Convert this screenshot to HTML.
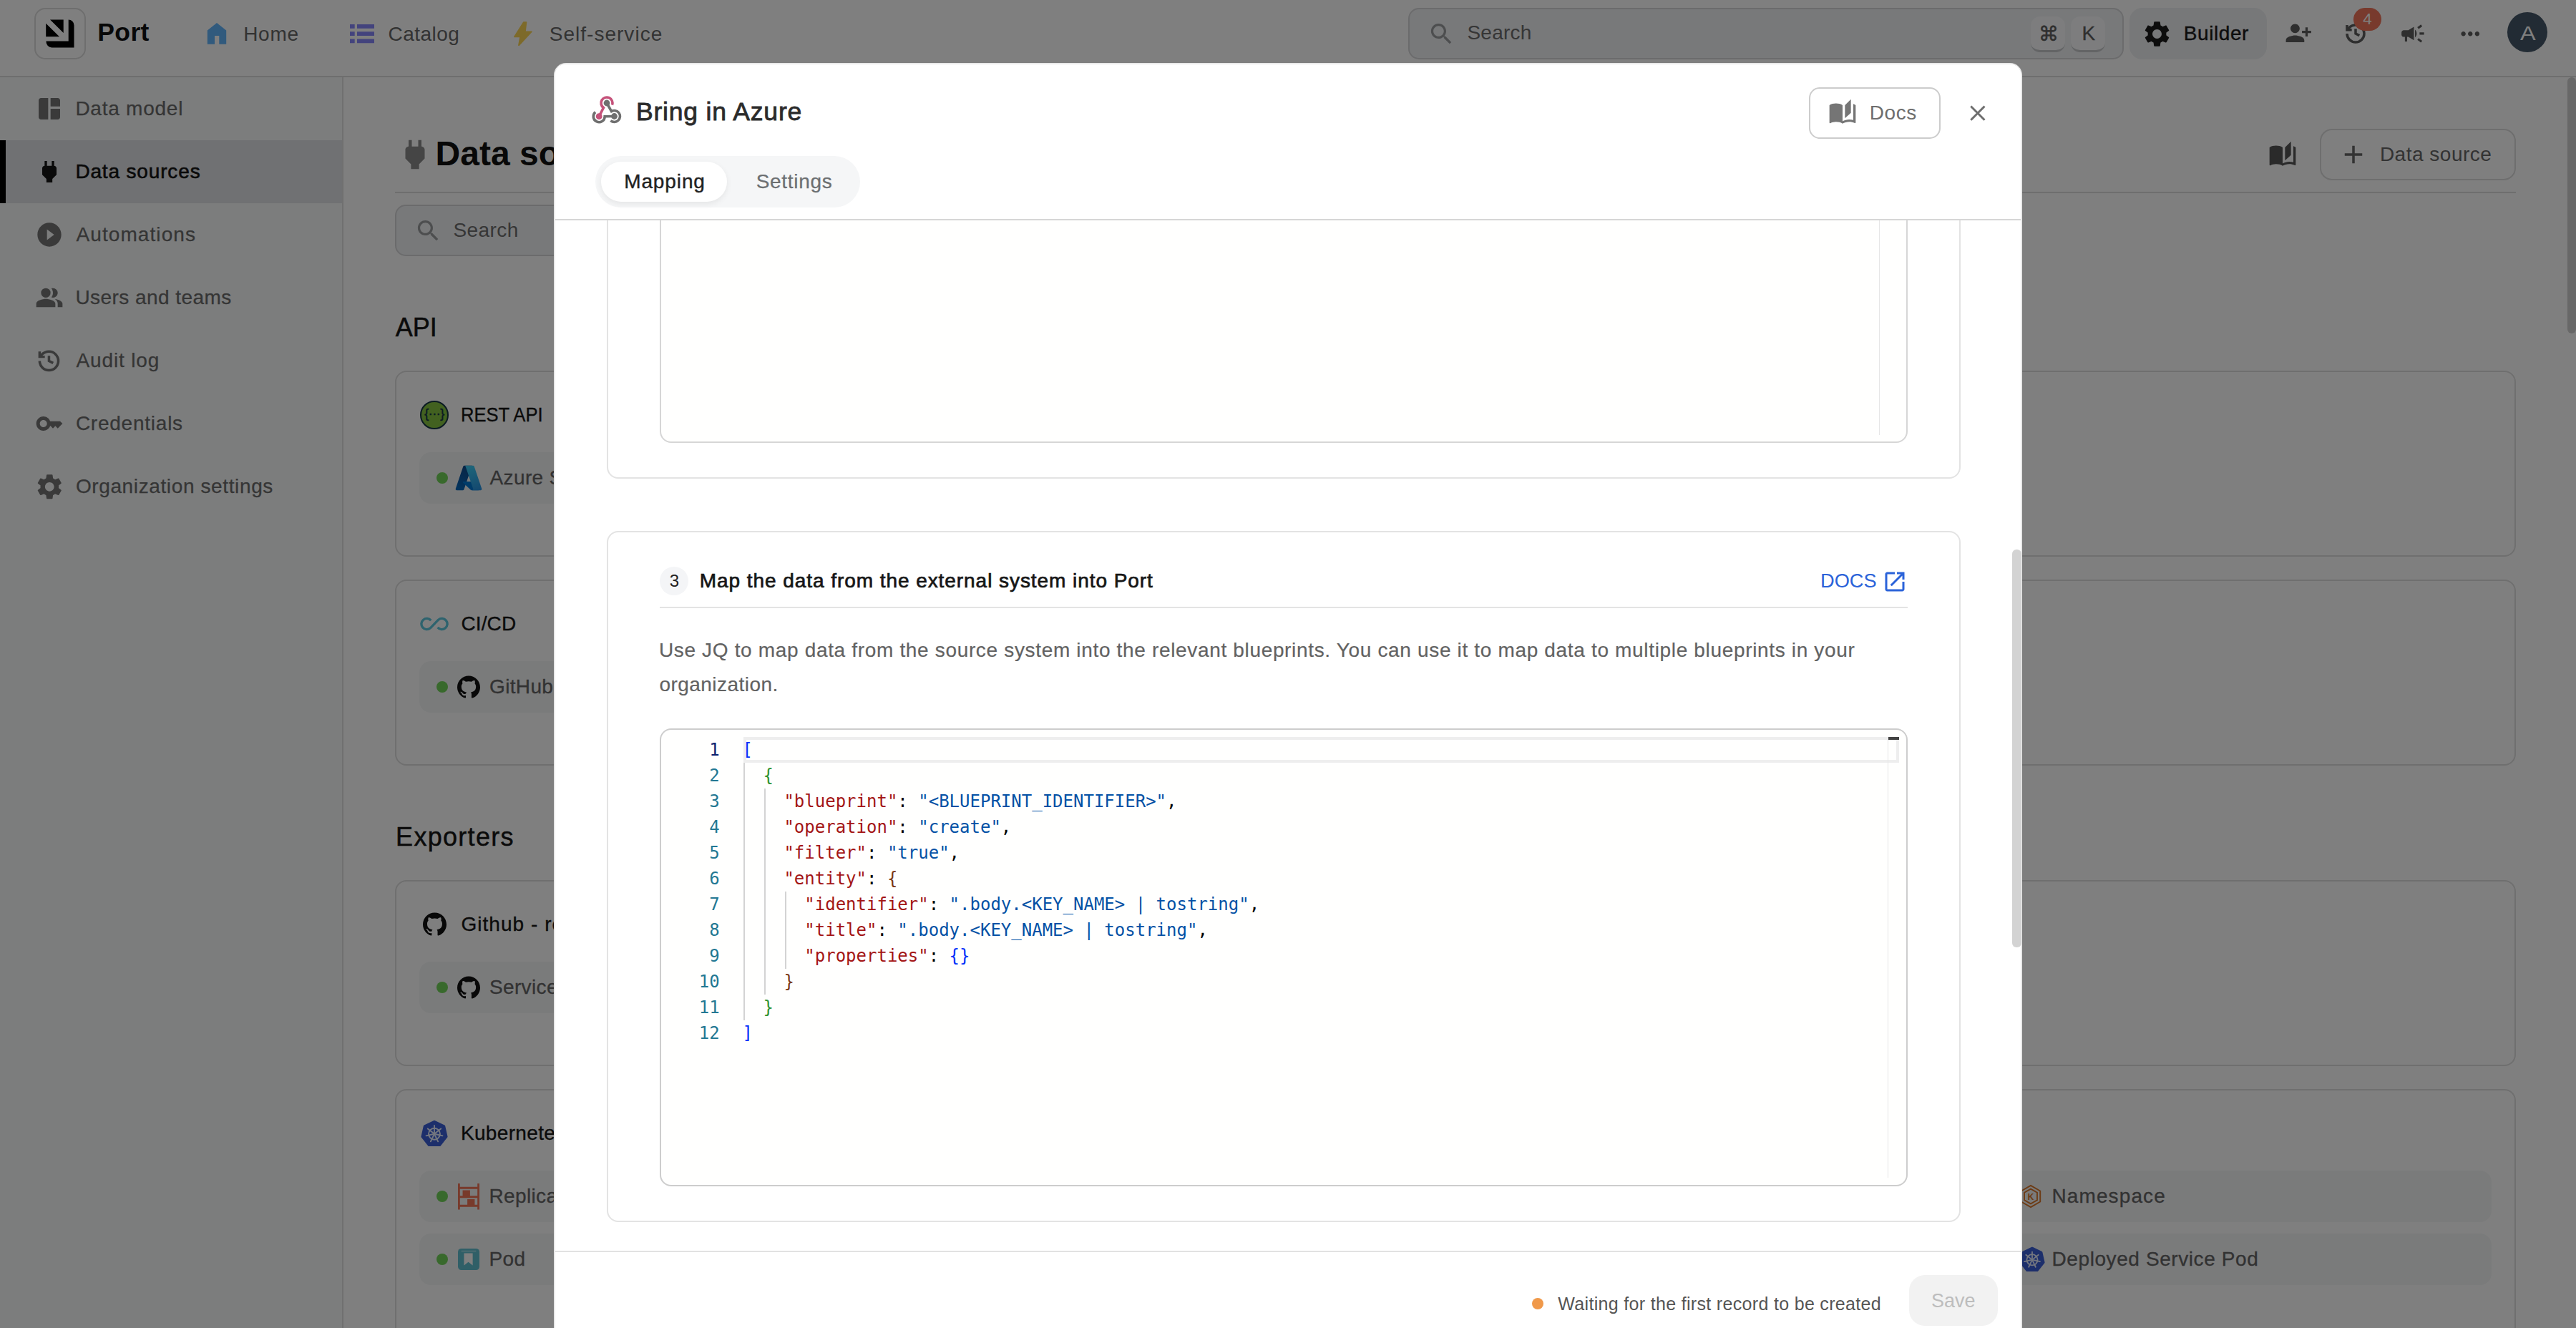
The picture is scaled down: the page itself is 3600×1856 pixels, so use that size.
<!DOCTYPE html>
<html lang="en">
<head>
<meta charset="utf-8">
<title>Port - Data sources</title>
<style>
*{box-sizing:border-box;margin:0;padding:0}
html,body{width:3600px;height:1856px;overflow:hidden;background:#fff}
body{font-family:"Liberation Sans",sans-serif;color:#1a1a1a;position:relative}
.t{position:absolute;white-space:nowrap;line-height:1;transform-origin:0 50%}
svg{position:absolute;display:block}
/* ---------- top nav ---------- */
#nav{position:absolute;left:0;top:0;width:3600px;height:108px;background:#fff;border-bottom:2px solid #dcdcdc}
#logo{position:absolute;left:48px;top:11px;width:72px;height:72px;border:2px solid #dcdcdc;border-radius:15px;background:#fff}
/* ---------- sidebar ---------- */
#side{position:absolute;left:0;top:108px;width:480px;height:1748px;background:#f8fafa;border-right:2px solid #e0e0e0}
/* ---------- main ---------- */
/* ---------- overlay + modal ---------- */
#ov{position:absolute;left:0;top:0;width:3600px;height:1856px;background:rgba(0,0,0,.5)}
#modal{position:absolute;left:774px;top:88px;width:2052px;height:1800px;background:#fff;border:2px solid #e9e9e9;border-bottom:0;border-radius:17px 17px 0 0}
.code{font-family:"DejaVu Sans Mono","Liberation Mono",monospace;font-size:24px;line-height:36px;white-space:pre}
/* safety net: if rendered in a 1800px CSS viewport at 2x DPR, scale the fixed 3600px canvas down */
@media (max-width:1900px){html{zoom:.5}}
</style>
</head>
<body>
<!-- ================= PAGE ================= -->
<div id="nav">
<div id="logo"></div>
<svg style="left:60px;top:23px" width="48" height="48" viewBox="60 23 48 48"><path fill="#000" d="M70 27.4H88.7V46Z M64.2 32.8V51.2H83Z M95.7 27.4a7.8 7.8 0 0 1 7.8 7.8V66.4H72.3a7.8 7.8 0 0 1-7.8-7.8V57.6H95.7Z"/></svg>
<div class="t" id="t1" style="left:136.2px;top:28.4px;font-size:35.5px;color:#111;font-weight:bold;letter-spacing:0.413px;">Port</div>
<svg style="left:288px;top:30px" width="30" height="34" viewBox="288 30 30 34"><path fill="#62b4fa" d="M303 32L316.2 42.5V61.7H306.3V50H300V61.7H289.8V42.5Z"/></svg>
<div class="t" id="t2" style="left:340.2px;top:33.7px;font-size:28px;color:#666666;letter-spacing:0.712px;">Home</div>
<svg style="left:489px;top:33.8px" width="34" height="27" viewBox="0 0 34 27"><path fill="#8686fb" d="M0 0h6.7v5.8H0zM10 0h24v5.8H10zM0 10.2h6.7v5.8H0zM10 10.2h24v5.8H10zM0 20.4h6.7v5.8H0zM10 20.4h24v5.8H10z"/></svg>
<div class="t" id="t3" style="left:542.6px;top:33.7px;font-size:28px;color:#666666;letter-spacing:0.454px;">Catalog</div>
<svg style="left:714px;top:28px" width="34" height="38" viewBox="714 28 34 38"><path fill="#fad454" stroke="#fad454" stroke-width="1.5" stroke-linejoin="round" d="M731.8 30.9H735.6L734 44.3H743L725.4 63.3H724.8L727 51.4H718.8Z"/></svg>
<div class="t" id="t4" style="left:767.7px;top:33.7px;font-size:28px;color:#666666;letter-spacing:1.025px;">Self-service</div>
<div style="position:absolute;left:1968.0px;top:11.0px;width:1000.0px;height:72.0px;background:#f0f2f5;border:2px solid #d6d7d9;border-radius:15px"></div>
<svg style="left:1995.0px;top:28.1px" width="39" height="39" viewBox="0 0 24 24"><path fill="#9a9d9f" d="M15.5 14h-.79l-.28-.27C15.41 12.59 16 11.11 16 9.5 16 5.91 13.09 3 9.5 3S3 5.91 3 9.5 5.91 16 9.5 16c1.61 0 3.09-.59 4.23-1.57l.27.28v.79l5 4.99L20.49 19l-4.99-5zm-6 0C7.01 14 5 11.99 5 9.5S7.01 5 9.5 5 14 7.01 14 9.5 11.99 14 9.5 14z"/></svg>
<div class="t" id="t5" style="left:2050.4px;top:32.3px;font-size:28px;color:#6c6c6c;letter-spacing:0.264px;">Search</div>
<div style="position:absolute;left:2838.0px;top:23.0px;width:48.0px;height:49.5px;background:#fafbfc;border-radius:13px;border-bottom:3px solid #c6c8cb"></div>
<div class="t" id="t6" style="left:2849.2px;top:33.9px;font-size:28px;color:#5e5e5e;-webkit-text-stroke:0.5px #5e5e5e;">&#8984;</div>
<div style="position:absolute;left:2894.0px;top:23.0px;width:48.0px;height:49.5px;background:#fafbfc;border-radius:13px;border-bottom:3px solid #c6c8cb"></div>
<div class="t" id="t7" style="left:2909.4px;top:33.4px;font-size:28px;color:#5e5e5e;-webkit-text-stroke:0.3px #5e5e5e;">K</div>
<div style="position:absolute;left:2976.0px;top:11.0px;width:192.0px;height:72.0px;background:#eef0f3;border-radius:18px"></div>
<svg style="left:2993.2px;top:25.8px" width="43" height="43" viewBox="0 0 24 24"><path fill="#1a1a1a" d="M19.14 12.94c.04-.3.06-.61.06-.94 0-.32-.02-.64-.07-.94l2.03-1.58c.18-.14.23-.41.12-.61l-1.92-3.32c-.12-.22-.37-.29-.59-.22l-2.39.96c-.5-.38-1.03-.7-1.62-.94l-.36-2.54c-.04-.24-.24-.41-.48-.41h-3.84c-.24 0-.43.17-.47.41l-.36 2.54c-.59.24-1.13.57-1.62.94l-2.39-.96c-.22-.08-.47 0-.59.22L2.74 8.87c-.12.21-.08.47.12.61l2.03 1.58c-.05.3-.09.63-.09.94s.02.64.07.94l-2.03 1.58c-.18.14-.23.41-.12.61l1.92 3.32c.12.22.37.29.59.22l2.39-.96c.5.38 1.03.7 1.62.94l.36 2.54c.05.24.24.41.48.41h3.84c.24 0 .44-.17.47-.41l.36-2.54c.59-.24 1.13-.56 1.62-.94l2.39.96c.22.08.47 0 .59-.22l1.92-3.32c.12-.22.07-.47-.12-.61l-2.01-1.58zM12 15.6c-1.98 0-3.6-1.62-3.6-3.6s1.62-3.6 3.6-3.6 3.6 1.62 3.6 3.6-1.62 3.6-3.6 3.6z"/></svg>
<div class="t" id="t8" style="left:3051.8px;top:32.8px;font-size:28px;color:#1a1a1a;-webkit-text-stroke:0.4px #1a1a1a;letter-spacing:0.578px;">Builder</div>
<svg style="left:3192.8px;top:27.4px" width="38.5" height="38.5" viewBox="0 0 24 24"><path fill="#5c5c5c" d="M13 8c0-2.21-1.79-4-4-4S5 5.79 5 8s1.79 4 4 4 4-1.79 4-4zm2 2v2h3v3h2v-3h3v-2h-3V7h-2v3h-3zM1 18v2h16v-2c0-2.66-5.33-4-8-4s-8 1.34-8 4z"/></svg>
<svg style="left:3276.4px;top:31.0px" width="32.0" height="32.0" viewBox="0 0 24 24"><g fill="none" stroke="#5c5c5c" stroke-width="2.62" stroke-linecap="butt" stroke-linejoin="miter"><path d="M3 12a9 9 0 1 0 9-9 9.75 9.75 0 0 0-6.74 2.74L3 8"/><path d="M3 3v5h5"/><path d="M12 7v5l4 2"/></g></svg>
<div style="position:absolute;left:3289.0px;top:11.0px;width:39.0px;height:32.0px;background:#f0745a;border-radius:16px"></div>
<div class="t" id="t9" style="left:3302.3px;top:16.4px;font-size:22.5px;color:#fff;">4</div>
<svg style="left:3352.9px;top:27.9px" width="37.8" height="37.8" viewBox="0 0 24 24"><path fill="#5c5c5c" d="M18 11v2h4v-2h-4zm-2 6.61c.96.71 2.21 1.65 3.2 2.39.4-.53.8-1.07 1.2-1.6-.99-.74-2.24-1.68-3.2-2.4-.4.54-.8 1.08-1.2 1.61zM20.4 5.6c-.4-.53-.8-1.07-1.2-1.6-.99.74-2.24 1.68-3.2 2.4.4.53.8 1.07 1.2 1.6.96-.72 2.21-1.65 3.2-2.4zM4 9c-1.1 0-2 .9-2 2v2c0 1.1.9 2 2 2h1v4h2v-4h1l5 3V6L8 9H4zm11.5 3c0-1.33-.58-2.53-1.5-3.35v6.69c.92-.81 1.5-2.01 1.5-3.34z"/></svg>
<svg style="left:3432.6px;top:27.7px" width="38.5" height="38.5" viewBox="0 0 24 24"><path fill="#5c5c5c" d="M6 10c-1.1 0-2 .9-2 2s.9 2 2 2 2-.9 2-2-.9-2-2-2zm12 0c-1.1 0-2 .9-2 2s.9 2 2 2 2-.9 2-2-.9-2-2-2zm-6 0c-1.1 0-2 .9-2 2s.9 2 2 2 2-.9 2-2-.9-2-2-2z"/></svg>
<div style="position:absolute;left:3503.6px;top:17.0px;width:56.4px;height:56.0px;background:#445668;border-radius:50%"></div>
<div class="t" id="t10" style="left:3522.0px;top:32.8px;font-size:28px;color:#fff;transform:scaleX(1.1580);">A</div>
</div>
<div id="side">
<svg style="left:49.0px;top:24.0px" width="40" height="40" viewBox="0 0 24 24"><path fill="#747474" d="M11 21H5c-1.1 0-2-.9-2-2V5c0-1.1.9-2 2-2h6v18zm2 0h6c1.1 0 2-.9 2-2v-7h-8v9zm8-11V5c0-1.1-.9-2-2-2h-6v7h8z"/></svg>
<div class="t" id="t11" style="left:105.4px;top:30.0px;font-size:28px;color:#6a6a6a;-webkit-text-stroke:0.25px #6a6a6a;letter-spacing:0.761px;">Data model</div>
<div style="position:absolute;left:0.0px;top:88.0px;width:478.0px;height:88.0px;background:#e1e3e6;border-left:8px solid #000"></div>
<svg style="left:49.0px;top:112.0px" width="40" height="40" viewBox="0 0 24 24"><path fill="#141414" d="M16.01 7L16 3h-2v4h-4V3H8v4h-.01C7 6.99 6 7.99 6 8.99v5.49L9.5 18v3h5v-3l3.5-3.51v-5.5c0-1-1-2-1.99-1.99z"/></svg>
<div class="t" id="t12" style="left:105.4px;top:118.0px;font-size:28px;color:#141414;-webkit-text-stroke:0.6px #141414;letter-spacing:0.843px;">Data sources</div>
<svg style="left:49.0px;top:200.0px" width="40" height="40" viewBox="0 0 24 24"><path fill="#747474" d="M12 2C6.48 2 2 6.48 2 12s4.48 10 10 10 10-4.48 10-10S17.52 2 12 2zm-2 14.5v-9l6 4.5-6 4.5z"/></svg>
<div class="t" id="t13" style="left:106.5px;top:206.0px;font-size:28px;color:#6a6a6a;-webkit-text-stroke:0.25px #6a6a6a;letter-spacing:1.080px;">Automations</div>
<svg style="left:49.0px;top:288.0px" width="40" height="40" viewBox="0 0 24 24"><path fill="#747474" d="M16.67 13.13C18.04 14.06 19 15.32 19 17v3h4v-3c0-2.18-3.57-3.47-6.33-3.87zM9 12a4 4 0 1 0 0-8 4 4 0 0 0 0 8zM15 12c2.21 0 4-1.79 4-4s-1.79-4-4-4c-.47 0-.91.1-1.33.24C14.5 5.27 15 6.580 15 8s-.5 2.730-1.330 3.760c.42.14.86.24 1.330.24zM9 13c-2.670 0-8 1.340-8 4v3h16v-3c0-2.660-5.330-4-8-4z"/></svg>
<div class="t" id="t14" style="left:105.4px;top:294.0px;font-size:28px;color:#6a6a6a;-webkit-text-stroke:0.25px #6a6a6a;letter-spacing:0.443px;">Users and teams</div>
<svg style="left:51.3px;top:378.5px" width="34.9" height="34.9" viewBox="0 0 24 24"><g fill="none" stroke="#747474" stroke-width="2.40" stroke-linecap="butt" stroke-linejoin="miter"><path d="M3 12a9 9 0 1 0 9-9 9.75 9.75 0 0 0-6.74 2.74L3 8"/><path d="M3 3v5h5"/><path d="M12 7v5l4 2"/></g></svg>
<div class="t" id="t15" style="left:106.5px;top:382.0px;font-size:28px;color:#6a6a6a;-webkit-text-stroke:0.25px #6a6a6a;letter-spacing:0.859px;">Audit log</div>
<svg style="left:49.0px;top:464.0px" width="40" height="40" viewBox="0 0 24 24"><path fill="#747474" d="M21 10h-8.35C11.83 7.67 9.61 6 7 6c-3.31 0-6 2.69-6 6s2.69 6 6 6c2.61 0 4.83-1.67 5.65-4H13l2 2 2-2 2 2 4-4.04L21 10zM7 15c-1.65 0-3-1.35-3-3s1.35-3 3-3 3 1.35 3 3-1.35 3-3 3z"/></svg>
<div class="t" id="t16" style="left:105.9px;top:470.0px;font-size:28px;color:#6a6a6a;-webkit-text-stroke:0.25px #6a6a6a;letter-spacing:0.760px;">Credentials</div>
<svg style="left:47.8px;top:550.8px" width="42.5" height="42.5" viewBox="0 0 24 24"><path fill="#747474" d="M19.14 12.94c.04-.3.06-.61.06-.94 0-.32-.02-.64-.07-.94l2.03-1.58c.18-.14.23-.41.12-.61l-1.92-3.32c-.12-.22-.37-.29-.59-.22l-2.39.96c-.5-.38-1.03-.7-1.62-.94l-.36-2.54c-.04-.24-.24-.41-.48-.41h-3.84c-.24 0-.43.17-.47.41l-.36 2.54c-.59.24-1.13.57-1.62.94l-2.39-.96c-.22-.08-.47 0-.59.22L2.74 8.87c-.12.21-.08.47.12.61l2.03 1.58c-.05.3-.09.63-.09.94s.02.64.07.94l-2.03 1.58c-.18.14-.23.41-.12.61l1.92 3.32c.12.22.37.29.59.22l2.39-.96c.5.38 1.03.7 1.62.94l.36 2.54c.05.24.24.41.48.41h3.84c.24 0 .44-.17.47-.41l.36-2.54c.59-.24 1.13-.56 1.62-.94l2.39.96c.22.08.47 0 .59-.22l1.92-3.32c.12-.22.07-.47-.12-.61l-2.01-1.58zM12 15.6c-1.98 0-3.6-1.62-3.6-3.6s1.62-3.6 3.6-3.6 3.6 1.62 3.6 3.6-1.62 3.6-3.6 3.6z"/></svg>
<div class="t" id="t17" style="left:105.9px;top:558.0px;font-size:28px;color:#6a6a6a;-webkit-text-stroke:0.25px #6a6a6a;letter-spacing:0.620px;">Organization settings</div>
</div>
<div id="main">
<div style="position:absolute;left:3588.0px;top:108.0px;width:12.0px;height:358.0px;background:#d0d0d0;border-radius:6px"></div>
<svg style="left:552.5px;top:189.0px" width="54" height="54" viewBox="0 0 24 24"><path fill="#8a8a8a" d="M16.01 7L16 3h-2v4h-4V3H8v4h-.01C7 6.99 6 7.99 6 8.99v5.49L9.5 18v3h5v-3l3.5-3.51v-5.5c0-1-1-2-1.99-1.99z"/></svg>
<div class="t" id="t18" style="left:608.6px;top:191.2px;font-size:48px;color:#111;font-weight:bold;">Data sources</div>
<svg style="left:3170.3px;top:196.3px" width="40" height="40" viewBox="0 0 24 24"><path fill="#555" d="M19 1l-5 5v11l5-4.5V1zM1 6v14.65c0 .25.25.5.5.5.1 0 .15-.05.25-.05C3.1 20.45 5.05 20 6.5 20c1.95 0 4.05.4 5.5 1.5V6c-1.45-1.1-3.55-1.5-5.5-1.5S2.45 4.9 1 6zm22 13.5V6c-.6-.45-1.25-.75-2-1v13.5c-1.1-.35-2.3-.5-3.5-.5-1.7 0-4.15.65-5.5 1.5v2c1.35-.85 3.8-1.5 5.5-1.5 1.65 0 3.35.3 4.75 1.05.1.05.15.05.25.05.25 0 .5-.25.5-.5v-1.1z"/></svg>
<div style="position:absolute;left:3242.0px;top:180.0px;width:274.0px;height:72.0px;border:2px solid #dcdcdc;border-radius:17px"></div>
<svg style="left:3268.0px;top:195.0px" width="42" height="42" viewBox="0 0 24 24"><path fill="#666" d="M19 13h-6v6h-2v-6H5v-2h6V5h2v6h6v2z"/></svg>
<div class="t" id="t19" style="left:3325.9px;top:201.9px;font-size:28px;color:#666;letter-spacing:0.507px;">Data source</div>
<div style="position:absolute;left:552.0px;top:268.0px;width:2964.0px;height:2.0px;background:#dcdcdc"></div>
<div style="position:absolute;left:552.0px;top:286.0px;width:900.0px;height:72.0px;background:#f0f2f5;border:2px solid #d6d7d9;border-radius:15px"></div>
<svg style="left:579.0px;top:302.5px" width="39" height="39" viewBox="0 0 24 24"><path fill="#9a9d9f" d="M15.5 14h-.79l-.28-.27C15.41 12.59 16 11.11 16 9.5 16 5.91 13.09 3 9.5 3S3 5.91 3 9.5 5.91 16 9.5 16c1.61 0 3.09-.59 4.23-1.57l.27.28v.79l5 4.99L20.49 19l-4.99-5zm-6 0C7.01 14 5 11.99 5 9.5S7.01 5 9.5 5 14 7.01 14 9.5 11.99 14 9.5 14z"/></svg>
<div class="t" id="t20" style="left:633.4px;top:307.9px;font-size:28px;color:#6c6c6c;letter-spacing:0.424px;">Search</div>
<div class="t" id="t21" style="left:552.8px;top:440.1px;font-size:36px;color:#161616;-webkit-text-stroke:0.5px #161616;">API</div>
<div class="t" id="t22" style="left:553.1px;top:1152.1px;font-size:36px;color:#161616;-webkit-text-stroke:0.5px #161616;letter-spacing:1.290px;">Exporters</div>
<div style="position:absolute;left:552.0px;top:518.0px;width:2964.0px;height:260.0px;border:2px solid #dedede;border-radius:16px;background:#fff"></div>
<div style="position:absolute;left:552.0px;top:810.0px;width:2964.0px;height:260.0px;border:2px solid #dedede;border-radius:16px;background:#fff"></div>
<div style="position:absolute;left:552.0px;top:1230.0px;width:2964.0px;height:260.0px;border:2px solid #dedede;border-radius:16px;background:#fff"></div>
<div style="position:absolute;left:552.0px;top:1522.0px;width:2964.0px;height:400.0px;border:2px solid #dedede;border-radius:16px;background:#fff"></div>
<div style="position:absolute;left:587.0px;top:560.0px;width:40.0px;height:40.0px;background:#85c341;border:2px solid #173647;border-radius:50%"></div>
<div style="position:absolute;left:587.0px;top:560.0px;width:40.0px;height:40.0px;text-align:center;font-size:18px;line-height:37px;color:#173647;-webkit-text-stroke:.5px #173647;letter-spacing:-.5px">{&middot;&middot;&middot;}</div>
<div class="t" id="t23" style="left:643.9px;top:566.7px;font-size:27px;color:#161616;-webkit-text-stroke:0.35px #161616;transform:scaleX(0.9463);">REST API</div>
<div style="position:absolute;left:586.0px;top:632.0px;width:712.0px;height:72.0px;background:#f5f6f7;border-radius:16px"></div>
<div style="position:absolute;left:610.0px;top:660.0px;width:16.0px;height:16.0px;background:#71d358;border-radius:50%"></div>
<svg style="left:635px;top:647.6px" width="40" height="40" viewBox="0 0 96 96"><defs><linearGradient id="aza" x1="0.6" y1="0" x2="0.3" y2="1"><stop offset="0" stop-color="#114a8b"/><stop offset="1" stop-color="#0669bc"/></linearGradient><linearGradient id="azb" x1="0.4" y1="0" x2="0.7" y2="1"><stop offset="0" stop-color="#3ccbf4"/><stop offset="1" stop-color="#2892df"/></linearGradient></defs><path fill="url(#aza)" d="M33.338 6.544h26.038l-27.03 80.087a4.152 4.152 0 0 1-3.933 2.824H8.149a4.145 4.145 0 0 1-3.928-5.47L29.404 9.368a4.152 4.152 0 0 1 3.934-2.825z"/><path fill="#0078d4" d="M71.175 60.261h-41.29a1.911 1.911 0 0 0-1.305 3.309l26.532 24.764a4.171 4.171 0 0 0 2.846 1.121h23.38z"/><path fill="url(#azb)" d="M66.595 9.364a4.145 4.145 0 0 0-3.928-2.82H33.648a4.146 4.146 0 0 1 3.928 2.82l25.184 74.62a4.146 4.146 0 0 1-3.928 5.472h29.02a4.146 4.146 0 0 0 3.927-5.472z"/></svg>
<div class="t" id="t24" style="left:684.6px;top:653.9px;font-size:28px;color:#646464;-webkit-text-stroke:0.3px #646464;letter-spacing:.35px;">Azure Subscription</div>
<svg style="left:586.9px;top:862.2px" width="40" height="20" viewBox="0 0 40 20"><path fill="none" stroke="#5cc6dc" stroke-width="3.4" stroke-linecap="butt" d="M15.32 5.11A7.6 7.6 0 1 0 14.390 15.820L25.610 4.180A7.600 7.600 0 1 1 24.680 14.890"/></svg>
<div class="t" id="t25" style="left:644.4px;top:857.9px;font-size:28px;color:#161616;-webkit-text-stroke:0.35px #161616;letter-spacing:0.151px;">CI/CD</div>
<div style="position:absolute;left:586.0px;top:924.0px;width:712.0px;height:72.0px;background:#f5f6f7;border-radius:16px"></div>
<div style="position:absolute;left:610.0px;top:952.0px;width:16.0px;height:16.0px;background:#71d358;border-radius:50%"></div>
<svg style="left:639.3px;top:944.0px" width="32" height="32" viewBox="0 0 24 24"><path fill="#111" d="M12 .297c-6.63 0-12 5.373-12 12 0 5.303 3.438 9.8 8.205 11.385.6.113.82-.258.82-.577 0-.285-.01-1.04-.015-2.04-3.338.724-4.042-1.61-4.042-1.61C4.422 18.07 3.633 17.7 3.633 17.7c-1.087-.744.084-.729.084-.729 1.205.084 1.838 1.236 1.838 1.236 1.07 1.835 2.809 1.305 3.495.998.108-.776.417-1.305.76-1.605-2.665-.3-5.466-1.332-5.466-5.93 0-1.31.465-2.38 1.235-3.22-.135-.303-.54-1.523.105-3.176 0 0 1.005-.322 3.3 1.23.96-.267 1.98-.399 3-.405 1.02.006 2.04.138 3 .405 2.28-1.552 3.285-1.23 3.285-1.23.645 1.653.24 2.873.12 3.176.765.84 1.23 1.91 1.23 3.22 0 4.61-2.805 5.625-5.475 5.92.42.36.81 1.096.81 2.22 0 1.606-.015 2.896-.015 3.286 0 .315.21.69.825.57C20.565 22.092 24 17.592 24 12.297c0-6.627-5.373-12-12-12"/></svg>
<div class="t" id="t26" style="left:684.0px;top:945.9px;font-size:28px;color:#646464;-webkit-text-stroke:0.3px #646464;letter-spacing:.35px;">GitHub Workflow</div>
<svg style="left:591.0px;top:1274.5px" width="33" height="33" viewBox="0 0 24 24"><path fill="#111" d="M12 .297c-6.63 0-12 5.373-12 12 0 5.303 3.438 9.8 8.205 11.385.6.113.82-.258.82-.577 0-.285-.01-1.04-.015-2.04-3.338.724-4.042-1.61-4.042-1.61C4.422 18.07 3.633 17.7 3.633 17.7c-1.087-.744.084-.729.084-.729 1.205.084 1.838 1.236 1.838 1.236 1.07 1.835 2.809 1.305 3.495.998.108-.776.417-1.305.76-1.605-2.665-.3-5.466-1.332-5.466-5.93 0-1.31.465-2.38 1.235-3.22-.135-.303-.54-1.523.105-3.176 0 0 1.005-.322 3.3 1.23.96-.267 1.98-.399 3-.405 1.02.006 2.04.138 3 .405 2.28-1.552 3.285-1.23 3.285-1.23.645 1.653.24 2.873.12 3.176.765.84 1.23 1.91 1.23 3.22 0 4.61-2.805 5.625-5.475 5.92.42.36.81 1.096.81 2.22 0 1.606-.015 2.896-.015 3.286 0 .315.21.69.825.57C20.565 22.092 24 17.592 24 12.297c0-6.627-5.373-12-12-12"/></svg>
<div class="t" id="t27" style="left:644.4px;top:1277.9px;font-size:28px;color:#161616;-webkit-text-stroke:0.35px #161616;letter-spacing:1.05px;">Github - repositories</div>
<div style="position:absolute;left:586.0px;top:1344.0px;width:712.0px;height:72.0px;background:#f5f6f7;border-radius:16px"></div>
<div style="position:absolute;left:610.0px;top:1372.0px;width:16.0px;height:16.0px;background:#71d358;border-radius:50%"></div>
<svg style="left:639.3px;top:1364.0px" width="32" height="32" viewBox="0 0 24 24"><path fill="#111" d="M12 .297c-6.63 0-12 5.373-12 12 0 5.303 3.438 9.8 8.205 11.385.6.113.82-.258.82-.577 0-.285-.01-1.04-.015-2.04-3.338.724-4.042-1.61-4.042-1.61C4.422 18.07 3.633 17.7 3.633 17.7c-1.087-.744.084-.729.084-.729 1.205.084 1.838 1.236 1.838 1.236 1.07 1.835 2.809 1.305 3.495.998.108-.776.417-1.305.76-1.605-2.665-.3-5.466-1.332-5.466-5.93 0-1.31.465-2.38 1.235-3.22-.135-.303-.54-1.523.105-3.176 0 0 1.005-.322 3.3 1.23.96-.267 1.98-.399 3-.405 1.02.006 2.04.138 3 .405 2.28-1.552 3.285-1.23 3.285-1.23.645 1.653.24 2.873.12 3.176.765.84 1.23 1.91 1.23 3.22 0 4.61-2.805 5.625-5.475 5.92.42.36.81 1.096.81 2.22 0 1.606-.015 2.896-.015 3.286 0 .315.21.69.825.57C20.565 22.092 24 17.592 24 12.297c0-6.627-5.373-12-12-12"/></svg>
<div class="t" id="t28" style="left:684.0px;top:1365.9px;font-size:28px;color:#646464;-webkit-text-stroke:0.3px #646464;letter-spacing:.35px;">Service</div>
<svg style="left:588px;top:1565px" width="38" height="38" viewBox="0 0 100 100"><polygon points="50.0,6.0 86.0,23.3 94.8,62.2 70.0,93.4 30.0,93.4 5.2,62.2 14.0,23.3" fill="#3a5fd6" stroke="#3a5fd6" stroke-width="8" stroke-linejoin="round"/><g stroke="#e8eeff" stroke-width="5" fill="none" stroke-linecap="round"><circle cx="50" cy="52" r="21"/><line x1="50.0" y1="46.0" x2="50.0" y2="21.0"/><line x1="54.7" y1="48.3" x2="74.2" y2="32.7"/><line x1="55.8" y1="53.3" x2="80.2" y2="58.9"/><line x1="52.6" y1="57.4" x2="63.5" y2="79.9"/><line x1="47.4" y1="57.4" x2="36.5" y2="79.9"/><line x1="44.2" y1="53.3" x2="19.8" y2="58.9"/><line x1="45.3" y1="48.3" x2="25.8" y2="32.7"/></g><circle cx="50" cy="52" r="5" fill="#e8eeff"/></svg>
<div class="t" id="t29" style="left:643.9px;top:1569.9px;font-size:28px;color:#161616;-webkit-text-stroke:0.35px #161616;letter-spacing:.35px;">Kubernetes - production cluster</div>
<div style="position:absolute;left:586.0px;top:1636.0px;width:712.0px;height:72.0px;background:#f5f6f7;border-radius:16px"></div>
<div style="position:absolute;left:610.0px;top:1664.0px;width:16.0px;height:16.0px;background:#71d358;border-radius:50%"></div>
<svg style="left:640px;top:1654px" width="30" height="36.5" viewBox="0 0 32 38" preserveAspectRatio="none"><path fill="#f07456" d="M0 0h3v38H0zM29 0h3v38h-3zM3 5h26v3H3zM3 18h26v3H3zM3 31h26v3H3zM7 10h11v8H7zM14 23h11v8H14z"/></svg>
<div class="t" id="t30" style="left:683.5px;top:1657.9px;font-size:28px;color:#646464;-webkit-text-stroke:0.3px #646464;letter-spacing:.35px;">ReplicaSet</div>
<div style="position:absolute;left:586.0px;top:1724.0px;width:712.0px;height:72.0px;background:#f5f6f7;border-radius:16px"></div>
<div style="position:absolute;left:610.0px;top:1752.0px;width:16.0px;height:16.0px;background:#71d358;border-radius:50%"></div>
<svg style="left:640px;top:1745px" width="30" height="30" viewBox="0 0 32 32"><rect x="0" y="0" width="32" height="32" rx="5" fill="#60bfce"/><rect x="5" y="3" width="22" height="1.6" fill="#a8dfe8"/><path fill="#fff" d="M9 7h13v18l-6.5-5L9 25Z"/></svg>
<div class="t" id="t31" style="left:683.5px;top:1745.9px;font-size:28px;color:#646464;-webkit-text-stroke:0.3px #646464;letter-spacing:.35px;">Pod</div>
<div style="position:absolute;left:1314.0px;top:1636.0px;width:712.0px;height:72.0px;background:#f5f6f7;border-radius:16px"></div>
<div style="position:absolute;left:1338.0px;top:1664.0px;width:16.0px;height:16.0px;background:#71d358;border-radius:50%"></div>
<div style="position:absolute;left:1314.0px;top:1724.0px;width:712.0px;height:72.0px;background:#f5f6f7;border-radius:16px"></div>
<div style="position:absolute;left:1338.0px;top:1752.0px;width:16.0px;height:16.0px;background:#71d358;border-radius:50%"></div>
<div style="position:absolute;left:2042.0px;top:1636.0px;width:712.0px;height:72.0px;background:#f5f6f7;border-radius:16px"></div>
<div style="position:absolute;left:2066.0px;top:1664.0px;width:16.0px;height:16.0px;background:#71d358;border-radius:50%"></div>
<div style="position:absolute;left:2042.0px;top:1724.0px;width:712.0px;height:72.0px;background:#f5f6f7;border-radius:16px"></div>
<div style="position:absolute;left:2066.0px;top:1752.0px;width:16.0px;height:16.0px;background:#71d358;border-radius:50%"></div>
<div style="position:absolute;left:2770.0px;top:1636.0px;width:712.0px;height:72.0px;background:#f5f6f7;border-radius:16px"></div>
<div style="position:absolute;left:2794.0px;top:1664.0px;width:16.0px;height:16.0px;background:#71d358;border-radius:50%"></div>
<svg style="left:2821px;top:1655px" width="34" height="34" viewBox="0 0 36 36"><g fill="none" stroke="#d9772b" stroke-width="2"><path d="M18 2 32 10v16L18 34 4 26V10Z"/><path d="M18 7 27.5 12.5v11L18 29 8.5 23.500v-11Z"/></g><text x="18" y="23" font-size="13" font-family="Liberation Sans,sans-serif" font-weight="bold" fill="#d9772b" text-anchor="middle">K</text></svg>
<div class="t" id="t32" style="left:2867.5px;top:1657.9px;font-size:28px;color:#646464;-webkit-text-stroke:0.3px #646464;letter-spacing:1.104px;">Namespace</div>
<div style="position:absolute;left:2770.0px;top:1724.0px;width:712.0px;height:72.0px;background:#f5f6f7;border-radius:16px"></div>
<div style="position:absolute;left:2794.0px;top:1752.0px;width:16.0px;height:16.0px;background:#71d358;border-radius:50%"></div>
<svg style="left:2822px;top:1742px" width="36" height="36" viewBox="0 0 100 100"><polygon points="50.0,6.0 86.0,23.3 94.8,62.2 70.0,93.4 30.0,93.4 5.2,62.2 14.0,23.3" fill="#3a5fd6" stroke="#3a5fd6" stroke-width="8" stroke-linejoin="round"/><g stroke="#e8eeff" stroke-width="5" fill="none" stroke-linecap="round"><circle cx="50" cy="52" r="21"/><line x1="50.0" y1="46.0" x2="50.0" y2="21.0"/><line x1="54.7" y1="48.3" x2="74.2" y2="32.7"/><line x1="55.8" y1="53.3" x2="80.2" y2="58.9"/><line x1="52.6" y1="57.4" x2="63.5" y2="79.9"/><line x1="47.4" y1="57.4" x2="36.5" y2="79.9"/><line x1="44.2" y1="53.3" x2="19.8" y2="58.9"/><line x1="45.3" y1="48.3" x2="25.8" y2="32.7"/></g><circle cx="50" cy="52" r="5" fill="#e8eeff"/></svg>
<div class="t" id="t33" style="left:2867.5px;top:1745.9px;font-size:28px;color:#646464;-webkit-text-stroke:0.3px #646464;letter-spacing:0.589px;">Deployed Service Pod</div>
</div>
<!-- ================= OVERLAY ================= -->
<div id="ov"></div>
<!-- ================= MODAL ================= -->
<div id="modal">
<div id="mbody" style="position:absolute;left:0;top:218px;width:2048px;height:1440px;overflow:hidden">
<div style="position:absolute;left:72.0px;top:-208.0px;width:1892.0px;height:569.0px;border:2px solid #e3e3e3;border-radius:16px;background:#fff"></div>
<div style="position:absolute;left:146.0px;top:-158.0px;width:1744.0px;height:469.0px;border:2px solid #d6d6d6;border-radius:16px;background:#fffffe"></div>
<div style="position:absolute;left:1850.0px;top:-158.0px;width:1.0px;height:458.0px;background:#e6e6e6"></div>
<div style="position:absolute;left:72.0px;top:434.0px;width:1892.0px;height:966.0px;border:2px solid #e3e3e3;border-radius:16px;background:#fff"></div>
<div style="position:absolute;left:146.0px;top:484.0px;width:40.0px;height:40.0px;background:#f4f5f7;border-radius:50%"></div>
<div class="t" id="t34" style="left:159.7px;top:492.3px;font-size:24px;color:#222;">3</div>
<div class="t" id="t35" style="left:201.7px;top:489.9px;font-size:28px;color:#161616;-webkit-text-stroke:0.7px #161616;letter-spacing:0.943px;">Map the data from the external system into Port</div>
<div class="t" id="t36" style="left:1767.9px;top:489.9px;font-size:28px;color:#2b63d9;transform:scaleX(0.9720);">DOCS</div>
<svg style="left:1853.5px;top:486.5px" width="36" height="36" viewBox="0 0 24 24"><path fill="#2b63d9" d="M19 19H5V5h7V3H5c-1.11 0-2 .9-2 2v14c0 1.1.89 2 2 2h14c1.1 0 2-.9 2-2v-7h-2v7zM14 3v2h3.59l-9.83 9.83 1.41 1.41L19 6.41V10h2V3h-7z"/></svg>
<div style="position:absolute;left:146.0px;top:540.0px;width:1744.0px;height:2.0px;background:#e3e3e3"></div>
<div class="t" id="t37" style="left:144.9px;top:586.8px;font-size:28px;color:#626262;-webkit-text-stroke:0.2px #626262;letter-spacing:0.664px;">Use JQ to map data from the source system into the relevant blueprints. You can use it to map data to multiple blueprints in your</div>
<div class="t" id="t38" style="left:145.4px;top:634.6px;font-size:28px;color:#626262;-webkit-text-stroke:0.2px #626262;letter-spacing:0.458px;">organization.</div>
<div style="position:absolute;left:146.0px;top:710.0px;width:1744.0px;height:640.0px;border:2px solid #cdcdcd;border-radius:16px;background:#fffffe"></div>
<div style="position:absolute;left:262.5px;top:722.0px;width:1615.5px;height:36.0px;border:4px solid #eeeeee"></div>
<div style="position:absolute;left:1862.0px;top:726.0px;width:1.0px;height:612.0px;background:#e6e6e6"></div>
<div style="position:absolute;left:1863.0px;top:722.0px;width:15.0px;height:4.0px;background:#424242"></div>
<div style="position:absolute;left:263.0px;top:758.0px;width:1.5px;height:360.0px;background:#d3d3d3"></div>
<div style="position:absolute;left:292.0px;top:794.0px;width:1.5px;height:288.0px;background:#d3d3d3"></div>
<div style="position:absolute;left:321.0px;top:938.0px;width:1.5px;height:108.0px;background:#d3d3d3"></div>
<div class="code" style="position:absolute;left:164.7px;top:722.0px;width:65.0px;height:432.0px;text-align:right"><div style="color:#0b216f">1</div><div style="color:#237893">2</div><div style="color:#237893">3</div><div style="color:#237893">4</div><div style="color:#237893">5</div><div style="color:#237893">6</div><div style="color:#237893">7</div><div style="color:#237893">8</div><div style="color:#237893">9</div><div style="color:#237893">10</div><div style="color:#237893">11</div><div style="color:#237893">12</div></div>
<div class="code" style="position:absolute;left:261.6px;top:722.0px;width:1590.0px;height:432.0px;"><div><span style="color:#0431fa">[</span></div><div><span style="color:#000">  </span><span style="color:#319331">{</span></div><div><span style="color:#000">    </span><span style="color:#a31515">"blueprint"</span><span style="color:#000">: </span><span style="color:#0451a5">"&lt;BLUEPRINT_IDENTIFIER&gt;"</span><span style="color:#000">,</span></div><div><span style="color:#000">    </span><span style="color:#a31515">"operation"</span><span style="color:#000">: </span><span style="color:#0451a5">"create"</span><span style="color:#000">,</span></div><div><span style="color:#000">    </span><span style="color:#a31515">"filter"</span><span style="color:#000">: </span><span style="color:#0451a5">"true"</span><span style="color:#000">,</span></div><div><span style="color:#000">    </span><span style="color:#a31515">"entity"</span><span style="color:#000">: </span><span style="color:#7b3814">{</span></div><div><span style="color:#000">      </span><span style="color:#a31515">"identifier"</span><span style="color:#000">: </span><span style="color:#0451a5">".body.&lt;KEY_NAME&gt; | tostring"</span><span style="color:#000">,</span></div><div><span style="color:#000">      </span><span style="color:#a31515">"title"</span><span style="color:#000">: </span><span style="color:#0451a5">".body.&lt;KEY_NAME&gt; | tostring"</span><span style="color:#000">,</span></div><div><span style="color:#000">      </span><span style="color:#a31515">"properties"</span><span style="color:#000">: </span><span style="color:#0431fa">{}</span></div><div><span style="color:#000">    </span><span style="color:#7b3814">}</span></div><div><span style="color:#000">  </span><span style="color:#319331">}</span></div><div><span style="color:#0431fa">]</span></div></div>
</div>
<div style="position:absolute;left:0.0px;top:0.0px;width:2048.0px;height:216.0px;background:#fff;border-radius:14px 14px 0 0"></div>
<div style="position:absolute;left:0.0px;top:216.0px;width:2048.0px;height:2.0px;background:#d6d6d6"></div>
<svg style="left:47px;top:41px" width="50" height="46" viewBox="823 131 50 46"><g fill="none" stroke-width="3.6" stroke-linecap="butt"><path stroke="#c5527a" d="M855.5 146.7A8 8 0 1 0 843.4 150.55L837.2 162.7"/><path stroke="#6f6f6f" d="M832.06 156.57A8 8 0 1 0 845.2 162.7L858.5 162.5"/><path stroke="#6f6f6f" d="M848 144L854.5 155.57A8 8 0 1 1 853.36 168.63"/></g><circle cx="837.2" cy="162.7" r="4.4" fill="#c5527a"/><circle cx="858.5" cy="162.5" r="4.4" fill="#6f6f6f"/><circle cx="848" cy="144" r="4.4" fill="#6f6f6f"/></svg>
<div class="t" id="t39" style="left:113.0px;top:49.2px;font-size:35.5px;color:#2b2b2b;-webkit-text-stroke:0.8px #2b2b2b;letter-spacing:0.786px;">Bring in Azure</div>
<div style="position:absolute;left:56.0px;top:128.0px;width:370.0px;height:72.0px;background:#f5f6f7;border-radius:36px"></div>
<div style="position:absolute;left:64.0px;top:136.0px;width:176.0px;height:56.0px;background:#fff;border-radius:28px;box-shadow:0 3px 8px rgba(0,0,0,.07)"></div>
<div class="t" id="t40" style="left:96.2px;top:149.5px;font-size:28px;color:#222;-webkit-text-stroke:0.4px #222;letter-spacing:0.889px;">Mapping</div>
<div class="t" id="t41" style="left:280.7px;top:149.5px;font-size:28px;color:#6c6f71;-webkit-text-stroke:0.25px #6c6f71;letter-spacing:0.695px;">Settings</div>
<div style="position:absolute;left:1752.0px;top:32.0px;width:184.0px;height:72.0px;border:2px solid #cccccc;border-radius:15px"></div>
<svg style="left:1779.0px;top:46.8px" width="40" height="40" viewBox="0 0 24 24"><path fill="#757575" d="M19 1l-5 5v11l5-4.5V1zM1 6v14.65c0 .25.25.5.5.5.1 0 .15-.05.25-.05C3.1 20.45 5.05 20 6.5 20c1.95 0 4.05.4 5.5 1.5V6c-1.45-1.1-3.55-1.5-5.5-1.5S2.45 4.9 1 6zm22 13.5V6c-.6-.45-1.25-.75-2-1v13.5c-1.1-.35-2.3-.5-3.5-.5-1.7 0-4.15.65-5.5 1.5v2c1.35-.85 3.8-1.5 5.5-1.5 1.65 0 3.35.3 4.75 1.05.1.05.15.05.25.05.25 0 .5-.25.5-.5v-1.1z"/></svg>
<div class="t" id="t42" style="left:1836.7px;top:53.5px;font-size:28px;color:#6e6e6e;letter-spacing:0.614px;">Docs</div>
<svg style="left:1974px;top:54px" width="28" height="28" viewBox="0 0 28 28"><path d="M4.3 4.5L23.5 23.700M23.500 4.500L4.300 23.700" stroke="#6e6e6e" stroke-width="3" fill="none"/></svg>
<div style="position:absolute;left:2036.0px;top:677.5px;width:12.5px;height:556.0px;background:#d3d3d3;border-radius:6px"></div>
<div style="position:absolute;left:0.0px;top:1658.0px;width:2048.0px;height:2.0px;background:#e2e2e2"></div>
<div style="position:absolute;left:0.0px;top:1660.0px;width:2048.0px;height:120.0px;background:#fff"></div>
<div style="position:absolute;left:1364.8px;top:1723.6px;width:16.4px;height:16.4px;background:#f0994a;border-radius:50%"></div>
<div class="t" id="t43" style="left:1401.3px;top:1719.9px;font-size:25px;color:#555;letter-spacing:0.323px;">Waiting for the first record to be created</div>
<div style="position:absolute;left:1892.0px;top:1692.0px;width:124.0px;height:71.0px;background:#f2f2f2;border-radius:22px"></div>
<div class="t" id="t44" style="left:1923.1px;top:1713.9px;font-size:28px;color:#bdbdbd;transform:scaleX(0.9642);">Save</div>
</div>
</body>
</html>
